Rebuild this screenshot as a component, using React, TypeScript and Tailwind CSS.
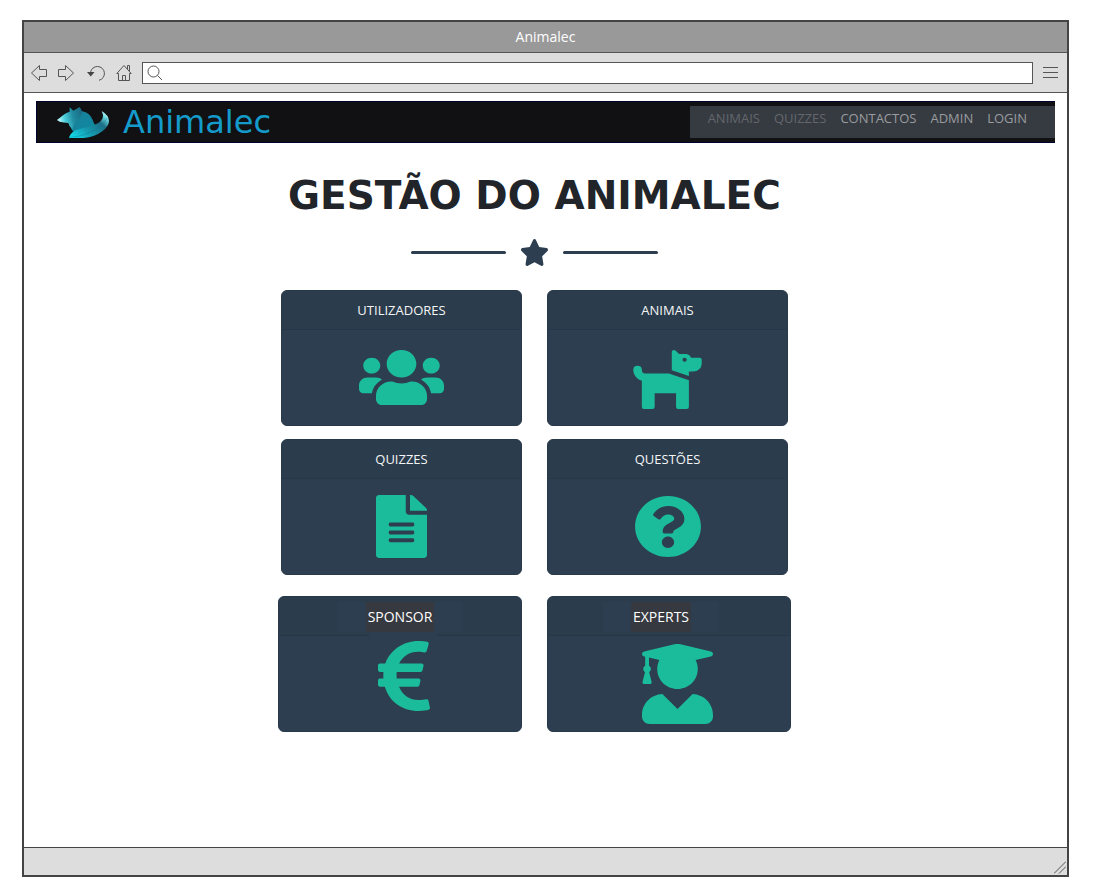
import React from "react";
import type { ReactNode } from "react";
import {
  FaDog,
  FaEuroSign,
  FaFileAlt,
  FaQuestionCircle,
  FaStar,
  FaUserGraduate,
  FaUsers,
} from "react-icons/fa";

function FoxLogo() {
  return (
    <svg viewBox="0 0 156 96" className="h-8 w-[52px]" aria-hidden="true">
      <defs>
        <linearGradient id="head" x1="0" y1="0.6" x2="1" y2="0.4">
          <stop offset="0" stopColor="#d8ffff" />
          <stop offset="0.3" stopColor="#4fd0de" />
          <stop offset="0.65" stopColor="#1f8ba0" />
          <stop offset="1" stopColor="#1a6d85" />
        </linearGradient>
        <linearGradient id="body" x1="0" y1="0" x2="1" y2="1">
          <stop offset="0" stopColor="#1b7f96" />
          <stop offset="1" stopColor="#0d8aa5" />
        </linearGradient>
        <linearGradient id="tail" x1="0" y1="0.9" x2="1" y2="0.1">
          <stop offset="0" stopColor="#14dcec" />
          <stop offset="0.35" stopColor="#159bb0" />
          <stop offset="0.7" stopColor="#1c6f86" />
          <stop offset="0.88" stopColor="#6fdbe2" />
          <stop offset="1" stopColor="#e6ffff" />
        </linearGradient>
      </defs>
      <path d="M50 22 Q62 14 76 16 Q98 20 106 40 Q110 54 118 62 L60 82 Q42 76 42 62 L50 46Z" fill="url(#body)" />
      <path d="M0 42 L20 26 Q28 20 38 17 L38 4 L49 14 L68 3 Q74 10 75 22 Q68 38 56 50 Q48 58 46 70 Q36 62 34 51 Q20 50 8 47Z" fill="url(#head)" />
      <path d="M134 15 Q156 28 156 46 Q155 62 136 76 Q112 94 80 96 L36 96 Q38 84 52 74 Q72 66 96 62 Q130 54 137 36 Q140 26 134 15Z" fill="url(#tail)" />
      <path d="M38 94 Q80 92 112 72 Q140 58 150 36" fill="none" stroke="#0c7088" strokeOpacity="0.55" strokeWidth="2" />
    </svg>
  );
}

function Toolbar() {
  const icon = "shrink-0 fill-none stroke-[#555]";
  return (
    <div className="flex h-10 items-center border-b border-[#555] bg-[#ddd] pr-[9px] pl-[7px]">
      <button type="button" aria-label="Voltar">
        <svg width="16" height="18" viewBox="0 0 16 18" className={icon}>
          <path d="M.5 9 8.500 1.500V5.500H15.500V12.500H8.500V16.500Z" />
        </svg>
      </button>
      <button type="button" aria-label="Avançar" className="ml-[11px]">
        <svg width="16" height="18" viewBox="0 0 16 18" className={icon}>
          <path d="M15.500 9 7.500 1.500V5.500H.5V12.500H7.500V16.500Z" />
        </svg>
      </button>
      <button type="button" aria-label="Recarregar" className="ml-[13px]">
        <svg width="18" height="18" viewBox="0 0 18 18" className={icon}>
          <path d="M3.500 8.500A7 7 0 1 1 12 16.300" />
          <path d="M0 8H7.500L3.800 12.500Z" className="fill-[#444] stroke-none" />
        </svg>
      </button>
      <button type="button" aria-label="Início" className="ml-[11px]">
        <svg width="16" height="18" viewBox="0 0 16 18" className={icon}>
          <path d="M2.500 9.500H.8L8 1.500 15.200 9.500H13.500V16.500H2.500ZM6.500 16.500V11.500H9.500V16.500M11.500 5V1.500H13.500V7" />
        </svg>
      </button>
      <label className="ml-[10px] flex h-[22px] flex-1 items-center border border-[#555] bg-white pl-1">
        <svg width="16" height="16" viewBox="0 0 16 16" className={icon}>
          <circle cx="6.500" cy="6.500" r="5.500" />
          <path d="M10.500 10.500 15 15" />
        </svg>
        <input type="text" aria-label="Endereço" className="w-full flex-1 px-2 text-xs outline-none" />
      </label>
      <button type="button" aria-label="Menu" className="ml-[10px] flex w-[15px] flex-col gap-1">
        <span className="h-px bg-[#555]" />
        <span className="h-px bg-[#555]" />
        <span className="h-px bg-[#555]" />
      </button>
    </div>
  );
}

function SiteHeader() {
  return (
    <header className="flex h-[42px] items-center justify-between border-y border-l border-[#00002e] bg-[#111113] pl-5">
      <a href="#inicio" className="flex items-center gap-[14px]">
        <FoxLogo />
        <span className="font-['DejaVu_Sans',sans-serif] text-[32px] leading-8 text-[#149bcb]">Animalec</span>
      </a>
      <nav className="flex h-8 items-start gap-[14px] bg-[#363a41] pt-1 pr-7 pl-[18px] text-[13px] leading-4 text-[#9a9c9f]">
        <a href="#animais" className="text-[#63676c]">ANIMAIS</a>
        <a href="#quizzes" className="text-[#63676c]">QUIZZES</a>
        <a href="#contactos">CONTACTOS</a>
        <a href="#admin">ADMIN</a>
        <a href="#login">LOGIN</a>
      </nav>
    </header>
  );
}

function Card({ href, title, children }: { href: string; title: ReactNode; children: ReactNode }) {
  return (
    <a
      href={href}
      className="flex h-[136px] flex-1 flex-col overflow-hidden rounded-md border border-[#28394a] bg-[#2d3e50] text-[#1bbc9c]"
    >
      <h2 className="flex h-[39px] shrink-0 items-center justify-center border-b border-[#273747] bg-[#2b3c4c] pt-[2px] text-[13px] text-[#f4f5f6]">
        {title}
      </h2>
      <div className="flex min-h-0 flex-1 items-center justify-center">{children}</div>
    </a>
  );
}

function Highlight({ className = "", children }: { className?: string; children: ReactNode }) {
  return (
    <span className={`relative bg-[#2d3e50] px-7 ${className}`}>
      <span className="block bg-[#363940] px-[2px] text-sm leading-[30px] text-white">{children}</span>
    </span>
  );
}

export default function App() {
  return (
    <div className="flex min-h-screen bg-white pt-5 pr-[31px] pl-[22px] font-['Open_Sans','Noto_Sans',sans-serif]">
      <div className="flex flex-1 flex-col border-2 border-[#444] bg-white">
        <div className="flex h-[31px] items-center justify-center border-b border-[#555] bg-[#999] text-sm text-white">
          Animalec
        </div>
        <Toolbar />
        <div className="flex-1 px-3 pt-2">
          <SiteHeader />
          <main className="flex flex-col items-center pr-[22px]">
            <h1 className="mt-7 font-['DejaVu_Sans',sans-serif] text-[39px] leading-[50px] font-bold whitespace-nowrap text-[#212529]">
              GESTÃO DO ANIMALEC
            </h1>
            <div className="mt-[18px] flex items-center gap-[14px] text-[#2c3e50]">
              <span className="h-[3px] w-[95px] rounded-full bg-[#2c3e50]" />
              <FaStar className="h-[27px] w-[29px]" preserveAspectRatio="none" />
              <span className="h-[3px] w-[95px] rounded-full bg-[#2c3e50]" />
            </div>
            <div className="mt-6 flex w-full max-w-[507px] gap-[25px]">
              <Card href="#utilizadores" title="UTILIZADORES">
                <FaUsers className="h-[63px] w-[85px]" preserveAspectRatio="none" />
              </Card>
              <Card href="#animais" title="ANIMAIS">
                <FaDog className="h-[63px] w-[77px]" preserveAspectRatio="none" />
              </Card>
            </div>
            <div className="mt-[13px] flex w-full max-w-[507px] gap-[25px]">
              <Card href="#quizzes" title="QUIZZES">
                <FaFileAlt className="h-[63px] w-[51px]" preserveAspectRatio="none" />
              </Card>
              <Card href="#questoes" title="QUESTÕES">
                <FaQuestionCircle className="h-[63px] w-[68px]" preserveAspectRatio="none" />
              </Card>
            </div>
            <div className="mt-[21px] flex w-full max-w-[513px] gap-[25px]">
              <Card
                href="#sponsor"
                title={
                  <Highlight>
                    SPONSOR
                    <span className="absolute top-full left-[31px] h-[6px] w-[68px] bg-[#2d3e50]" />
                  </Highlight>
                }
              >
                <FaEuroSign className="mb-4 ml-2 h-20 w-[52px]" preserveAspectRatio="none" />
              </Card>
              <Card href="#experts" title={<Highlight className="mr-4">EXPERTS</Highlight>}>
                <FaUserGraduate className="ml-4 h-20 w-[71px]" preserveAspectRatio="none" />
              </Card>
            </div>
          </main>
        </div>
        <div className="flex h-7 items-end justify-end border-t border-[#444] bg-[#ddd] pr-px pb-px">
          <svg width="12" height="13" viewBox="0 0 12 13" className="fill-none stroke-[#555]" aria-hidden="true">
            <path d="M0 12.500 12 .5M5 12.500 12 5.500" />
          </svg>
        </div>
      </div>
    </div>
  );
}
